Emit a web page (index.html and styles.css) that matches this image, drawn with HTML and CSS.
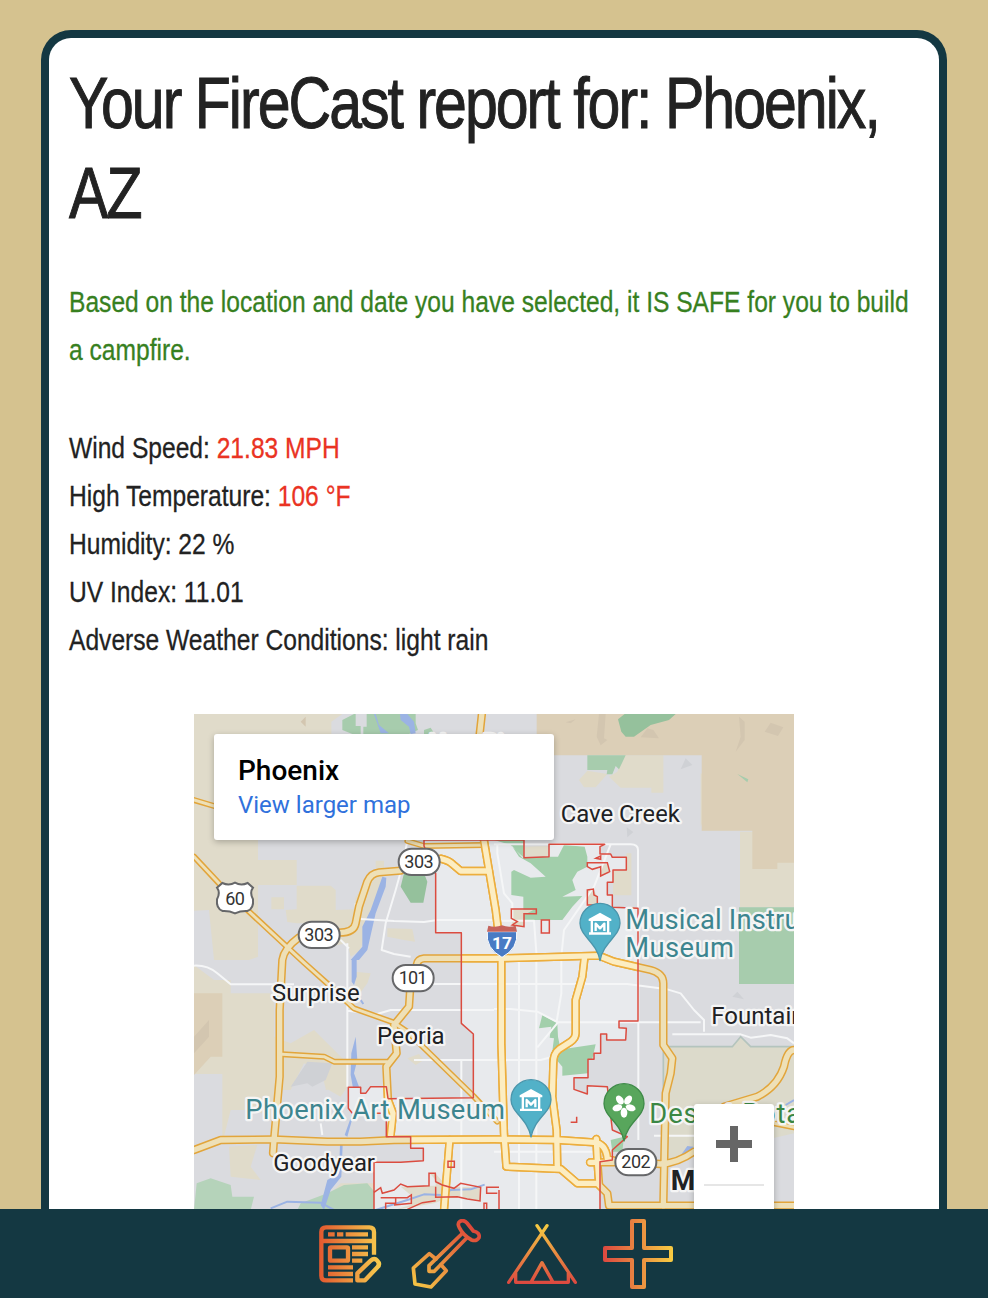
FILE: index.html
```html
<!DOCTYPE html>
<html lang="en">
<head>
<meta charset="utf-8">
<title>FireCast</title>
<link rel="stylesheet" href="styles.css">
</head>
<body>
<main class="report">
  <div class="narrow">
    <h1 class="title">Your FireCast report for: Phoenix, AZ</h1>
    <p class="verdict">Based on the location and date you have selected, it IS SAFE for you to build a campfire.</p>
    <ul class="stats">
      <li>Wind Speed: <span class="alert">21.83 MPH</span></li>
      <li>High Temperature: <span class="alert">106 °F</span></li>
      <li>Humidity: 22 %</li>
      <li>UV Index: 11.01</li>
      <li>Adverse Weather Conditions: light rain</li>
    </ul>
  </div>
  <section class="map">
    <svg class="map-art" viewBox="0 12 1800 1800" width="600" height="600">
      <defs>
        <path id="city" d="M690 390V408L725 490V668H802V940L838 972V1163L582 1166 577 1130H530L515 1150H500V1132H463V1195L475 1210H577V1280H650V1315H688V1352L620 1357H540V1500H1218V1355L1255 1350V1320L1300 1280 1255 1260 1240 1130 1180 1127V1152L1140 1138V1103H1182V1048H1200V1030H1220V972H1238V990H1295L1297 955 1275 953V933H1332V595L1255 592V555H1240V517H1257V480H1297V442H1255L1250 432H1218V410L1232 403H1065V440L990 443V390Z"/>
        <g id="wide">
          <path d="M620 482 555 487Q530 490 520 515L495 590 485 640Q480 668 435 668M740 446Q765 452 775 462L800 483H885M315 682Q270 715 265 750L257 900V1100L240 1290 237 1330"/>
          <path d="M865 0 855 90M868 380 905 600 922 740V1000L930 1270 937 1370 1100 1377 1150 1420H1210L1240 1450 1245 1487H1800"/>
          <path d="M648 845 645 890 600 945 608 1030 577 1070 582 1170 597 1210 590 1275"/>
          <path d="M668 765Q670 747 690 745L900 745 1000 743 1215 737 1260 755 1370 780Q1408 790 1408 820V1005L1435 1045 1430 1090 1415 1150 1408 1487"/>
          <path d="M1172 740 1165 800 1145 870V970Q1145 985 1130 995L1095 1018Q1078 1030 1078 1060L1075 1160 1088 1260 1090 1370"/>
          <path d="M0 1320 80 1290 240 1288 400 1295H500L600 1290 900 1288 1090 1290 1200 1297Q1235 1300 1240 1345L1270 1355 1400 1362Q1450 1360 1500 1325"/>
          <path d="M767 1290 750 1500M1207 1287 1210 1350 1215 1420M1188 1357H1280M1800 1020Q1780 1020 1770 1070 1750 1130 1690 1160L1590 1190"/>
        </g>
        <g id="slim">
          <path d="M0 440 75 520 160 600 330 758 405 825 480 895 600 938 640 965 840 1160 910 1235M0 270 60 288M640 393 690 408 875 405M265 1033 390 1040 420 1055H580M1740 1240 1800 1252"/>
        </g>
        <path id="pin" d="M0 172C-9 118-60 98-60 60A60 60 0 0 1 60 60C60 98 9 118 0 172Z"/>
        <g id="museum">
          <path fill="#fff" d="M0 28 34 47V53H28V87H33V94H-33V87H-28V53H-34V47ZM-21 53V87H21V53Z" fill-rule="evenodd"/>
          <path fill="none" stroke="#fff" stroke-width="7" d="M-13 83V61L0 75 13 61V83"/>
        </g>
      </defs>
      <rect width="1800" height="1820" fill="#dadbdf"/>
      <g fill="#e0dbca">
        <path d="M0 12H445L412 35V80H800V280H192V450H308V525H192V740L165 750H60L45 600 0 602Z"/>
        <path d="M308 527H410L425 540V600L480 598 485 560 530 500 570 495 560 560 520 640 500 720 470 740 460 700 400 710 360 640 308 640 280 636 275 600 308 598Z"/>
        <path d="M232 562H270V598H232ZM545 452H570V475H545ZM580 655 655 657 663 695 630 690 580 680Z"/>
        <path d="M0 765 60 810H110V850H240V980L290 1000 360 960 460 1060V1130L440 1160 395 1135 380 1080 330 1060 290 1140H240V1240L190 1200H110L85 1300 85 1092H0ZM105 1310 190 1305 170 1370 200 1410 110 1400ZM395 1080 455 1095V1130L395 1140Z"/>
        <path d="M1290 136H1408V248H1372V233H1280L1245 200 1270 185ZM1155 210 1180 182 1240 192 1205 232H1170ZM1520 190 1565 210 1540 270 1548 280 1520 350ZM1638 365H1800V592H1638ZM1297 430H1312V556H1257V480H1297Z"/>
        <path d="M480 785 530 790 520 820 490 860ZM440 1420H540V1500H360ZM640 1045 675 1032 690 1050 665 1065Z"/>
      </g>
      <path fill="#dcdacb" d="M1408 1010H1610L1642 980 1672 1010H1800V1270L1500 1340 1408 1350Z"/>
      <g fill="#dccfb7">
        <path d="M1028 12H1800V458H1750V477H1675V362H1523V136H1028Z"/>
        <path d="M0 850H85V1040H50L0 1095Z"/>
      </g>
      <g fill="#d3c6b0">
        <path d="M1115 37 1145 28 1130 40ZM1215 12H1235L1230 85 1240 90 1220 106 1208 80ZM1340 82 1360 55 1378 60 1395 85ZM1635 20 1652 35V90L1625 125 1640 80ZM1712 65 1730 38 1768 52 1752 78ZM0 980 45 930V980L0 1030ZM320 35 335 20 335 50Z"/>
      </g>
      <path fill="#cfd1d5" d="M290 1130 340 1055 415 1060 395 1110 355 1130 340 1120ZM1460 178 1475 145 1495 165ZM1298 352 1318 366 1300 382ZM1615 860 1630 845 1650 868Z"/>
      <g fill="#a7ccad">
        <path d="M445 30 480 12H665V40L672 60 645 72H475L445 60ZM690 60 710 53 722 72H690ZM1180 136H1295L1275 178 1265 168 1255 193H1238L1240 180H1180ZM1635 592H1800V822H1635ZM1630 192 1663 208 1660 217Z"/>
        <path fill="#95c19c" d="M1272 28 1292 12H1445L1425 30 1370 45 1320 80 1295 80 1282 65ZM630 490H690L700 515 688 578H650L620 530Z"/>
        <path fill="#b5d3ba" d="M8 1420 50 1405 110 1425 115 1460H180L170 1500H0ZM400 1450 450 1425 520 1420 545 1450V1500H310L320 1480Z"/>
      </g>
      <path fill="#dadbdf" d="M485 12H518V50H508V72H500V48H485Z"/>
      <g fill="#9bb3e4">
        <path d="M520 12H540L560 70H585L555 45 545 12ZM618 12H640L660 35 665 70 650 72 645 50 620 30Z"/>
        <path d="M565 500 577 503 575 530 545 610 520 720 495 750H470L505 710 505 650 530 600ZM473 750H488V800L480 825 473 815ZM485 980 490 1050 480 1090 495 1130 485 1190 460 1280 452 1275 475 1210 478 1140 470 1095 472 1030ZM438 1305H446L442 1400 410 1440 390 1500 380 1485 400 1410 435 1390ZM1450 1350 1480 1308 1498 1310 1475 1350Z"/>
      </g>
      <path class="river" d="M230 1495 280 1475 380 1478 420 1500M500 870 508 882M1105 1407 1210 1370M1775 1185 1800 1170"/>
      <use href="#city" fill="#e8eaed"/>
      <path fill="#e8eaed" d="M700 415H900V690H802V668H725V490L700 460Z"/>
      <g fill="#a2cfab">
        <path d="M900 390H990V443L970 425 950 405ZM952 405 975 440 1010 460 1055 500 1010 503 960 480 952 485V555L988 560V630H1105L1135 590 1165 558 1105 560 1145 540 1135 510 1150 485 1180 470V440L1172 410 1110 405 1092 440H1065L985 443Z"/>
        <path d="M1045 915 1090 940 1092 980 1100 1020 1075 1023 1080 985 1067 983 1072 950 1035 955ZM1090 1020 1205 1003 1195 1048H1182V1090L1105 1097V1070L1088 1050ZM1250 1290 1290 1280 1285 1325 1255 1325Z"/>
      </g>
      <path fill="#e0dbca" d="M992 410 1062 408V438L995 440ZM952 597 1018 600 990 615V648H955ZM1180 540 1198 537 1210 560V585H1180ZM1220 465 1240 462 1245 490 1220 497ZM620 1430 725 1427V1410L707 1390H724L760 1430 860 1432V1475L800 1460 760 1465 720 1480 600 1500 650 1485 650 1455Z"/>
      <path class="river" d="M545 1500 640 1470 690 1453 740 1455 770 1440 830 1438 872 1424"/>
      <g class="streets">
        <path d="M910 405V430L930 550 955 580V630M900 632H1020L1028 740M1250 403 1200 530 1110 660 1102 740V850L1088 935M900 822H1300L1420 838 1460 850 1500 900 1530 930V965M900 897H950L1030 905 1092 937H1330L1520 937M1030 1012 1092 937M900 1050H1040L1085 1038M975 750V1500M1027 750V1500M1333 600V1290M900 1325H1210M1380 1277H1590M802 1050V1500M660 1050H900"/>
        <path d="M1435 973H1640L1670 983 1730 975 1780 985 1800 1000M900 403H1310Q1332 403 1332 420V600"/>
        <path d="M500 627 600 633 690 636 730 630H900M640 390 630 450 605 540 575 640 563 720 600 732 650 740M460 700V1130M440 690 465 715M0 767Q40 765 70 790L110 823H300M460 902 550 912 590 900H900M680 822H900M380 1240 385 1275M485 580V630"/>
      </g>
      <path class="parkline" d="M1408 1160V1010H1615L1640 980 1670 1010H1800"/>
      <use href="#wide" stroke="#e2a53b" stroke-width="25"/>
      <use href="#slim" stroke="#e2a53b" stroke-width="18"/>
      <use href="#wide" stroke="#eee0b7" stroke-width="16"/>
      <use href="#slim" stroke="#eee0b7" stroke-width="9"/>
      <clipPath id="inner"><use href="#city"/></clipPath>
      <g clip-path="url(#inner)">
        <use href="#wide" stroke="#edae3c" stroke-width="25"/>
        <use href="#wide" stroke="#fcedc2" stroke-width="16"/>
      </g>
      <use href="#city" class="boundary"/>
      <g class="boundary">
        <path d="M952 597H1027V611H990V650L955 645 970 635 952 625ZM1042 630H1066V669H1042ZM1180 458H1240L1247 485 1220 498V470L1195 478 1180 470ZM1205 445 1220 438V448ZM1180 540 1198 537 1200 555 1210 560V585H1180Z"/>
        <path d="M762 1354H781V1372H762ZM540 1447 560 1433 565 1450 600 1440 620 1422 640 1430 705 1427V1390H724L725 1415 745 1425 780 1435 800 1420 860 1432 858 1473 820 1467 790 1460 725 1462V1430M560 1463H640L652 1455V1480L600 1485M575 1497V1480H605V1465M640 1498 685 1478 725 1472M915 1432H878V1450H910M870 1500V1480H878V1500M915 1440V1500M1130 1237H1148V1220"/>
      </g>
      <g class="shields">
        <rect x="614" y="416" width="123" height="79" rx="39"/>
        <rect x="314" y="635" width="123" height="79" rx="39"/>
        <rect x="596" y="765" width="123" height="79" rx="39"/>
        <rect x="1264" y="1317" width="123" height="79" rx="39"/>
        <path d="M85 519Q105 528 123 518 141 528 161 519L177 533Q166 548 177 568 180 596 160 603 140 602 123 610 106 602 86 603 66 596 69 568 80 548 69 533Z"/>
      </g>
      <g class="shield-text" text-anchor="middle">
        <text x="675" y="474" textLength="88">303</text>
        <text x="375" y="693" textLength="88">303</text>
        <text x="657" y="823" textLength="86">101</text>
        <text x="1326" y="1375" textLength="88">202</text>
        <text x="123" y="586" textLength="59">60</text>
      </g>
      <path fill="#497bc4" stroke="#fff" stroke-width="3" d="M880 665H968Q974 715 924 742 874 715 880 665Z"/>
      <path fill="#c5635c" d="M883 647Q904 654 924 646 944 654 965 647L969 665H879Z"/>
      <text class="interstate" x="924" y="717" text-anchor="middle">17</text>
      <g class="labels">
        <text x="705" y="122">New River</text>
        <text x="1100" y="337" textLength="358">Cave Creek</text>
        <text x="234" y="874" textLength="263">Surprise</text>
        <text x="549" y="1003" textLength="203">Peoria</text>
        <text x="238" y="1384" textLength="305">Goodyear</text>
        <text x="1552" y="941">Fountain Hills</text>
        <text class="bold" x="1430" y="1441">Mesa</text>
        <g class="poi">
          <text x="1294" y="656" textLength="712">Musical Instrument</text>
          <text x="1294" y="740" textLength="326">Museum</text>
          <text x="154" y="1226" textLength="779">Phoenix Art Museum</text>
          <text class="garden" x="1366" y="1238" textLength="526">Desert Botani</text>
        </g>
      </g>
      <g transform="translate(1218 580)"><use href="#pin" fill="#52b1c8" stroke="#4b96ac" stroke-width="4"/><use href="#museum"/></g>
      <g transform="translate(1011 1109)"><use href="#pin" fill="#52b1c8" stroke="#4b96ac" stroke-width="4"/><use href="#museum"/></g>
      <g transform="translate(1290 1121)">
        <use href="#pin" fill="#58a65c" stroke="#3f8b49" stroke-width="4"/>
        <g fill="#fff">
          <ellipse cy="45" rx="10" ry="15" transform="rotate(36 0 66)"/>
          <ellipse cy="45" rx="10" ry="15" transform="rotate(108 0 66)"/>
          <ellipse cy="45" rx="10" ry="15" transform="rotate(180 0 66)"/>
          <ellipse cy="45" rx="10" ry="15" transform="rotate(252 0 66)"/>
          <ellipse cy="45" rx="10" ry="15" transform="rotate(324 0 66)"/>
        </g>
      </g>
    </svg>
    <div class="place-card">
      <strong class="place-name">Phoenix</strong>
      <a class="place-link">View larger map</a>
    </div>
    <div class="zoom-control">
      <svg width="36" height="36" viewBox="0 0 36 36"><path fill="#666" d="M14 0h8v14h14v8H22v14h-8V22H0v-8h14z"/></svg>
      <hr class="zoom-divider">
    </div>
  </section>
</main>
<nav class="tabs">
  <svg class="tab" viewBox="45 42 210 210">
    <defs><linearGradient id="g1" gradientUnits="userSpaceOnUse" x1="57" y1="0" x2="243" y2="0"><stop stop-color="#e2582f"/><stop offset="1" stop-color="#f8cd4e"/></linearGradient></defs>
    <g fill="none" stroke="url(#g1)" stroke-width="13">
      <path d="M159 226H78Q64 226 64 212V81Q64 67 78 67H208Q222 67 222 81V149M64 108H222"/>
      <path d="M84 88H104M111 88H130M137 88H204M156 127H204M156 147H204M156 167H187M84 187H159M84 207H159"/>
      <rect x="90" y="127" width="54" height="40" rx="3"/>
      <path stroke-linejoin="round" d="M172 226V205L212 167Q223 157 232 167 242 177 232 187L195 226Z"/>
    </g>
  </svg>
  <svg class="tab" viewBox="333 42 210 210">
    <defs><linearGradient id="g2" gradientUnits="userSpaceOnUse" x1="350" y1="250" x2="520" y2="60"><stop stop-color="#f4c545"/><stop offset="1" stop-color="#dd4439"/></linearGradient></defs>
    <g fill="none" stroke="url(#g2)" stroke-width="11" stroke-linejoin="round" stroke-linecap="round">
      <path d="M408 162 388 146 340 189 345 237 393 246 439 197 423 179"/>
      <path d="M485 87 387 182V199H403L500 99"/>
      <path d="M478 68Q471 55 480 49 491 43 501 54L520 78Q541 83 537 98 529 110 515 105 490 92 478 68Z"/>
    </g>
  </svg>
  <svg class="tab" viewBox="51 42 210 210">
    <defs><linearGradient id="g3" gradientUnits="userSpaceOnUse" x1="0" y1="60" x2="0" y2="236"><stop stop-color="#f6cb43"/><stop offset="1" stop-color="#dc4840"/></linearGradient></defs>
    <path fill="none" stroke="url(#g3)" stroke-width="10" stroke-linecap="round" stroke-linejoin="round" d="M171 62 56 232M141 62 256 232M77 204V232H235V204M124 230 156 173 188 230"/>
  </svg>
  <svg class="tab" viewBox="339 42 210 210">
    <defs><linearGradient id="g4" gradientUnits="userSpaceOnUse" x1="339" y1="0" x2="549" y2="0"><stop stop-color="#dc4840"/><stop offset="1" stop-color="#f8cc42"/></linearGradient></defs>
    <path fill="none" stroke="url(#g4)" stroke-width="12" stroke-linejoin="round" d="M426 48H462V129H543V165H462V246H426V165H345V129H426Z"/>
  </svg>
</nav>
</body>
</html>
```

FILE: styles.css
```css
* { box-sizing: border-box; }
body {
  margin: 0;
  height: 1298px;
  overflow: hidden;
  padding: 30px 41px 0;
  background: #d5c28f;
  font-family: "Liberation Sans", Arial, sans-serif;
  color: #222;
}
.report {
  height: 1268px;
  padding: 20px;
  border: 8px solid #143842;
  border-bottom: 0;
  border-radius: 30px 30px 0 0;
  background: #fff;
}
/* Condensed type: regular sans squeezed to 82% of its width. */
.narrow {
  width: 1036.6px;
  transform: scaleX(.82);
  transform-origin: 0 0;
  font-size: 30px;
  line-height: 48px;
  -webkit-text-stroke: .3px;
}
.title {
  margin: 0 0 40px;
  font-size: 72px;
  font-weight: 400;
  line-height: 90px;
  letter-spacing: -2.42px;
  -webkit-text-stroke: 1px;
}
.verdict { margin: 0 0 50px; color: #37801f; }
.stats { margin: 0; padding: 0; list-style: none; }
.alert { color: #ea3323; }
.map {
  position: relative;
  width: 600px;
  height: 560px;
  margin: 50px auto 0;
  overflow: hidden;
  font-family: Roboto, sans-serif;
}
.map-art { display: block; }
.map-art use, .river, .streets { stroke-linejoin: round; }
#wide, #slim { fill: none; stroke-linecap: round; }
.river { fill: none; stroke: #9bb3e4; stroke-width: 6; }
.streets { fill: none; stroke: #f5f6f7; stroke-width: 6; }
.parkline { fill: none; stroke: #b4c4be; stroke-width: 5; }
.boundary { fill: none; stroke: #db4c40; stroke-width: 4.5; }
.shields { fill: #fff; stroke: #666769; stroke-width: 6; }
.shield-text { font-size: 54px; fill: #333; }
.interstate { font-size: 52px; font-weight: 700; fill: #fff; }
.labels {
  font-size: 72px;
  fill: #202124;
  stroke: #f5f5f5;
  stroke-width: 14px;
  stroke-linejoin: round;
  paint-order: stroke;
}
.bold { font-size: 84px; font-weight: 700; }
.poi { font-size: 82px; fill: #3d858f; }
.garden { fill: #3b8744; }
.place-card {
  position: absolute;
  left: 20px;
  top: 20px;
  width: 340px;
  height: 106px;
  padding: 20px 24px;
  border-radius: 3px;
  background: #fff;
  box-shadow: 0 2px 6px rgba(0, 0, 0, .25);
}
.place-name { display: block; font-size: 28px; font-weight: 500; line-height: 34px; color: #000; }
.place-link { display: block; font-size: 24px; line-height: 35px; color: #3071dc; }
.zoom-control {
  position: absolute;
  left: 500px;
  top: 390px;
  width: 80px;
  height: 162px;
  padding: 22px 10px;
  border-radius: 3px;
  background: #fff;
  box-shadow: 0 2px 6px rgba(0, 0, 0, .25);
}
.zoom-control svg { display: block; margin: 0 auto; }
.zoom-divider { margin: 22px 0 0; border: 0; height: 2px; background: #e6e6e6; }
.tabs {
  position: fixed;
  left: 0;
  right: 0;
  bottom: 0;
  display: flex;
  justify-content: center;
  gap: 26px;
  height: 89px;
  padding-top: 10px;
  background: #143842;
}
.tab { width: 70px; height: 70px; }
```
